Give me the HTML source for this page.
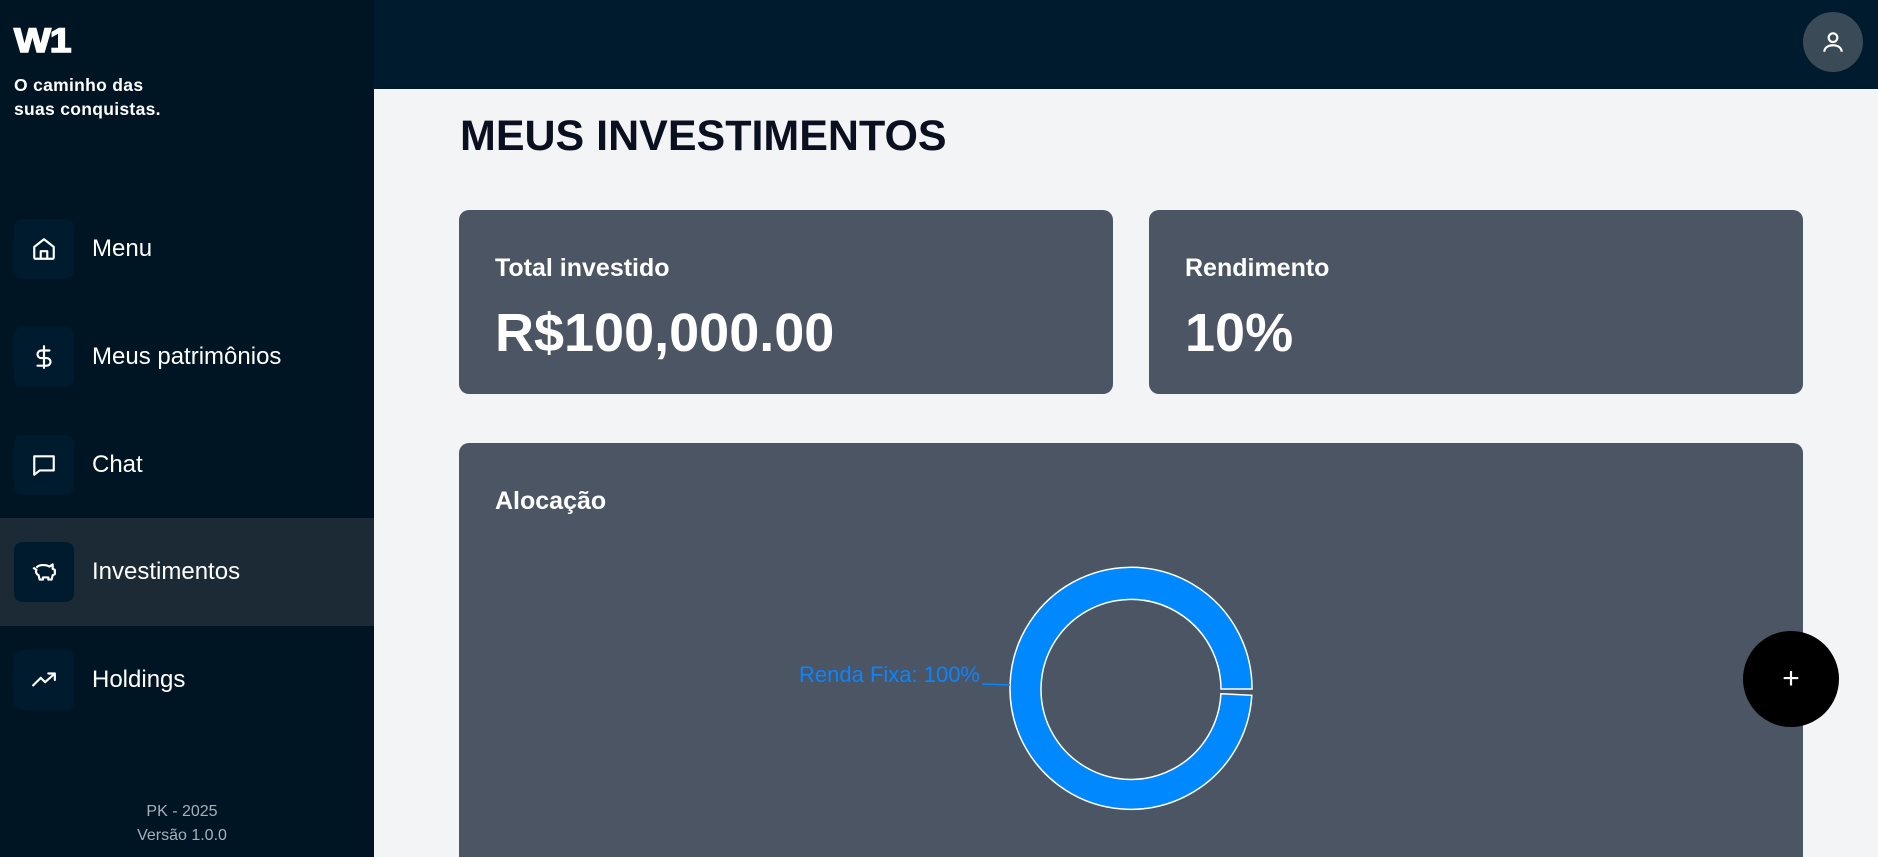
<!DOCTYPE html>
<html><head><meta charset="utf-8"><style>
*{margin:0;padding:0;box-sizing:border-box}
html,body{width:1878px;height:857px;overflow:hidden}
body{background:#f3f4f6;font-family:"Liberation Sans",sans-serif;position:relative}
.side{position:absolute;left:0;top:0;width:374px;height:857px;background:#001523}
.logo{position:absolute;left:14px;top:22px;color:#fff;font-weight:900;font-size:34px;letter-spacing:-1px;font-family:"Liberation Sans",sans-serif;-webkit-text-stroke:1.5px #fff;transform:scaleX(1.15);transform-origin:left}
.tag{position:absolute;left:14px;top:73px;color:#fff;font-weight:bold;font-size:17.5px;line-height:24px;letter-spacing:0.3px}
.item{position:absolute;left:0;width:374px;height:108px}
.item.act{background:#1b2a35}
.ib{position:absolute;left:14px;top:24px;width:60px;height:60px;border-radius:8px;background:#001a2e;display:flex;align-items:center;justify-content:center}
.lbl{position:absolute;left:92px;top:40px;color:#fff;font-size:24px;line-height:28px}
.foot{position:absolute;left:0;width:364px;text-align:center;color:#a7b0ba;font-size:16px;line-height:24px;top:800px}
.head{position:absolute;left:374px;top:0;width:1504px;height:89px;background:#001a2e}
.av{position:absolute;left:1803px;top:12px;width:60px;height:60px;border-radius:50%;background:#3b4a57;display:flex;align-items:center;justify-content:center}
h1{position:absolute;left:460px;top:112px;font-size:43px;color:#0b1020;font-weight:bold}
.card{position:absolute;background:#4b5563;border-radius:10px;color:#fff}
.ct{position:absolute;left:36px;top:44px;font-size:25px;font-weight:bold}
.cv{position:absolute;left:36px;top:92px;font-size:54px;font-weight:bold}
.fab{position:absolute;left:1743px;top:631px;width:96px;height:96px;border-radius:50%;background:#000;color:#fff;font-size:30px;display:flex;align-items:center;justify-content:center}
</style></head><body>
<div class="side">
<div class="logo">W1</div>
<div class="tag">O caminho das<br>suas conquistas.</div>
<div class="item" style="top:195px"><div class="ib"><svg width="26" height="26" viewBox="0 0 24 24" fill="none" stroke="#fff" stroke-width="2" stroke-linejoin="round"><path d="M3 10l9-7 9 7v10a1 1 0 0 1-1 1H4a1 1 0 0 1-1-1z"/><path d="M9 21v-7h6v7"/></svg></div><div class="lbl">Menu</div></div>
<div class="item" style="top:303px"><div class="ib"><svg width="26" height="28" viewBox="0 0 24 24" fill="none" stroke="#fff" stroke-width="2" stroke-linecap="round"><path d="M12 2v20M17 6H9.5a3.5 3.5 0 0 0 0 7h5a3.5 3.5 0 0 1 0 7H6"/></svg></div><div class="lbl">Meus patrimônios</div></div>
<div class="item" style="top:411px"><div class="ib"><svg width="26" height="26" viewBox="0 0 24 24" fill="none" stroke="#fff" stroke-width="2" stroke-linejoin="round"><path d="M3 4h18v13H8l-5 4z"/></svg></div><div class="lbl">Chat</div></div>
<div class="item act" style="top:518px"><div class="ib"><svg width="28" height="26" viewBox="0 0 24 24" fill="none" stroke="#fff" stroke-width="2" stroke-linejoin="round"><path d="M5 8c2-3 9-3 12-1l3-2v4l2 1v4l-2 1-1 4h-3v-2h-5v2H8l-1-4c-2-1-3-3-2-5L2 8"/></svg></div><div class="lbl">Investimentos</div></div>
<div class="item" style="top:626px"><div class="ib"><svg width="28" height="26" viewBox="0 0 24 24" fill="none" stroke="#fff" stroke-width="2" stroke-linecap="round" stroke-linejoin="round"><path d="M2 17l7-7 4 4 9-8M16 6h6v6"/></svg></div><div class="lbl">Holdings</div></div>
<div class="foot">PK - 2025<br>Versão 1.0.0</div>
</div>
<div class="head"></div>
<div class="av"><svg width="26" height="26" viewBox="0 0 24 24" fill="none" stroke="#fff" stroke-width="2"><circle cx="12" cy="8" r="4"/><path d="M4 21c0-4 4-6 8-6s8 2 8 6"/></svg></div>
<h1>MEUS INVESTIMENTOS</h1>
<div class="card" style="left:459px;top:210px;width:654px;height:184px"><div class="ct">Total investido</div><div class="cv">R$100,000.00</div></div>
<div class="card" style="left:1149px;top:210px;width:654px;height:184px"><div class="ct">Rendimento</div><div class="cv">10%</div></div>
<div class="card" style="left:459px;top:443px;width:1344px;height:414px;border-radius:10px 10px 0 0"><div class="ct" style="top:44px">Alocação</div></div>
<svg style="position:absolute;left:0;top:0" width="1878" height="857">
<path d="M1251.8,695.3 A121,121 0 1 1 1252,689 L1221,689 A90,90 0 1 0 1220.9,693.7 Z" fill="#0088ff" stroke="#fff" stroke-width="1.5"/>
<line x1="982" y1="684" x2="1010" y2="685" stroke="#0088ff" stroke-width="1.5"/>
<text x="980" y="682" text-anchor="end" fill="#0a84ff" font-size="22" font-family="Liberation Sans, sans-serif">Renda Fixa: 100%</text>
</svg>
<div class="fab">+</div>
</body></html>
